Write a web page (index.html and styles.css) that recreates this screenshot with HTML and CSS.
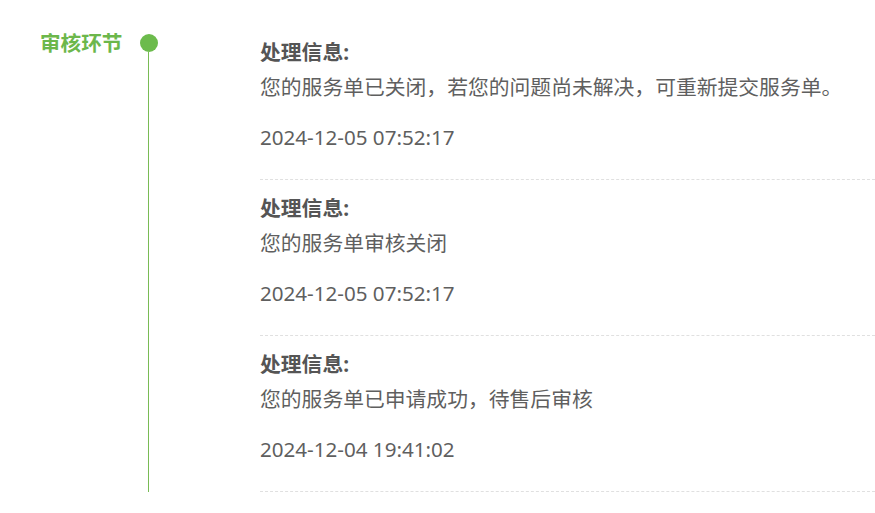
FILE: index.html
```html
<!DOCTYPE html>
<html lang="zh-CN">
<head>
<meta charset="utf-8">
<title>审核环节</title>
<link rel="stylesheet" href="styles.css">
</head>
<body>
<div class="timeline">
  <div class="side">
    <div class="label">审核环节</div>
    <div class="track">
      <span class="dot"></span>
      <span class="line"></span>
    </div>
  </div>
  <ul class="records">
    <li class="record">
      <div class="title">处理信息:</div>
      <div class="desc">您的服务单已关闭，若您的问题尚未解决，可重新提交服务单。</div>
      <div class="time">2024-12-05 07:52:17</div>
    </li>
    <li class="record">
      <div class="title">处理信息:</div>
      <div class="desc">您的服务单审核关闭</div>
      <div class="time">2024-12-05 07:52:17</div>
    </li>
    <li class="record">
      <div class="title">处理信息:</div>
      <div class="desc">您的服务单已申请成功，待售后审核</div>
      <div class="time">2024-12-04 19:41:02</div>
    </li>
  </ul>
</div>
</body>
</html>
```

FILE: styles.css
```css
html, body {
  margin: 0;
  padding: 0;
  background: #fff;
}

body {
  font-family: "Noto Sans", "Noto Sans CJK SC", sans-serif;
  color: #5f5f5f;
}

.timeline {
  display: flex;
  padding-top: 24px;
}

.side {
  display: flex;
  align-items: stretch;
  width: 260px;
  flex-shrink: 0;
  margin-top: 10px;
}

.label {
  box-sizing: border-box;
  width: 139px;
  flex-shrink: 0;
  padding-left: 40px;
  font-size: 20.6px;
  line-height: 18px;
  font-weight: bold;
  color: #6cb74b;
  white-space: nowrap;
}

.track {
  width: 19px;
  flex-shrink: 0;
  display: flex;
  flex-direction: column;
  align-items: center;
}

.dot {
  width: 18px;
  height: 18px;
  border-radius: 50%;
  background: #6cbb4c;
  flex-shrink: 0;
}

.line {
  width: 1px;
  flex: 1;
  background: #79bb55;
}

.records {
  list-style: none;
  margin: 0;
  padding: 0;
  flex: 1;
}

.record {
  padding: 11px 0 25px;
  border-bottom: 1px dashed #e0e0e0;
}

.title {
  font-size: 20.8px;
  line-height: 34px;
  font-weight: bold;
  color: #555;
}

.desc {
  margin-top: 1px;
  font-size: 20.8px;
  line-height: 34px;
}

.time {
  margin-top: 16px;
  font-size: 20.6px;
  line-height: 34px;
}
```
